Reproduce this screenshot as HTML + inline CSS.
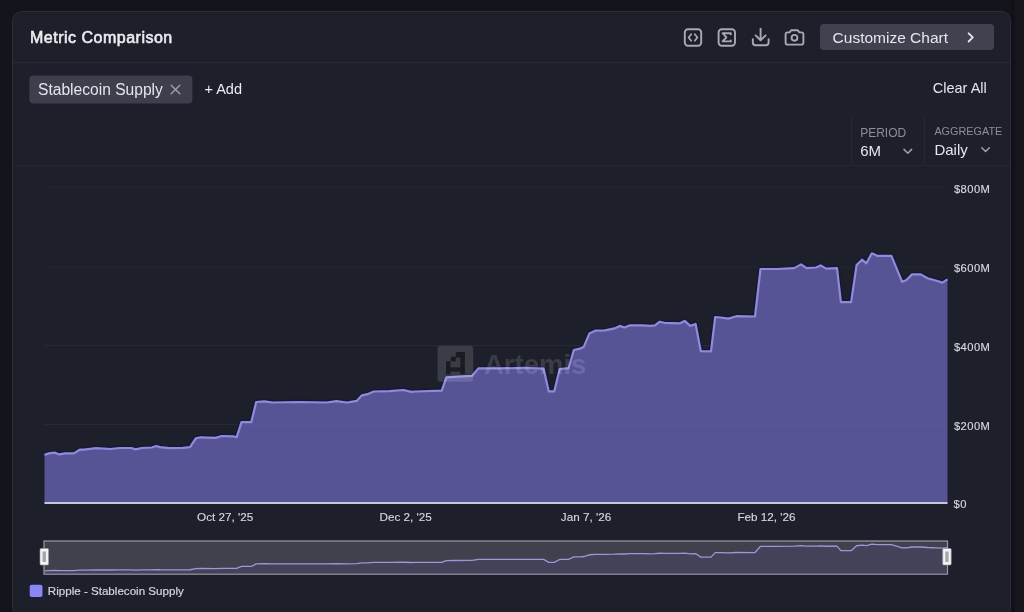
<!DOCTYPE html>
<html><head><meta charset="utf-8">
<style>
html,body{margin:0;padding:0;width:1024px;height:612px;overflow:hidden;background:#14141c;}
body{position:relative;font-family:"Liberation Sans",sans-serif;}
.card{position:absolute;left:12px;top:11px;width:999px;height:606px;background:#1d1f2b;border:1px solid #2c2d38;border-radius:10px;box-sizing:border-box;}
svg{position:absolute;left:0;top:0;will-change:transform;}
</style></head><body>
<div style="position:absolute;left:1011px;top:0;width:4px;height:612px;background:#111118"></div><div style="position:absolute;left:1015px;top:0;width:9px;height:612px;background:#17161d"></div>
<div class="card"></div>
<svg width="1024" height="612" viewBox="0 0 1024 612" font-family="Liberation Sans, sans-serif">
  <!-- separators -->
  <rect x="13" y="62" width="997" height="1" fill="#292a36"/>
  <rect x="13" y="165" width="997" height="1" fill="#262733"/>
  <rect x="851" y="115" width="1" height="50" fill="#272834"/>
  <rect x="924" y="115" width="1" height="50" fill="#272834"/>
  <!-- title -->
  <text x="30" y="43.1" font-size="16" letter-spacing="0.5" fill="#ececf0" stroke="#ececf0" stroke-width="0.6">Metric Comparison</text>
  <!-- icons -->
  <g fill="none" stroke="#a9a9b3" stroke-width="1.9" stroke-linecap="round" stroke-linejoin="round">
    <rect x="684.8" y="29.3" width="16.4" height="16.4" rx="3.2"/>
    <path d="M691.2,34.3 L688.6,37.5 L691.2,40.7 M694.8,34.3 L697.4,37.5 L694.8,40.7" stroke-width="1.8"/>
    <rect x="718.6" y="29.3" width="16.4" height="16.4" rx="3.2"/>
    <path d="M730.8,34.2 L730.8,33.2 L722.6,33.2 L726.4,37.3 L722.6,41.4 L730.8,41.4 L730.8,40.4" stroke-width="1.9"/>
    <path d="M760.6,28.6 L760.6,40 M755.6,35.4 L760.6,40.3 L765.6,35.4 M752.8,39.3 L752.8,42.6 Q752.8,45.3 755.5,45.3 L765.9,45.3 Q768.6,45.3 768.6,42.6 L768.6,39.3"/>
    <path d="M785.6,34.6 Q785.6,32.4 787.8,32.4 L789.6,32.4 L791.2,30.2 L797.8,30.2 L799.4,32.4 L801.2,32.4 Q803.4,32.4 803.4,34.6 L803.4,42.4 Q803.4,44.6 801.2,44.6 L787.8,44.6 Q785.6,44.6 785.6,42.4 Z"/>
    <circle cx="794.5" cy="37.8" r="2.9"/>
  </g>
  <!-- customize button -->
  <rect x="820" y="24" width="174" height="26" rx="4" fill="#41424f"/>
  <text x="832.6" y="43" font-size="15.5" fill="#e6e6ec">Customize Chart</text>
  <path d="M968.6,33.3 L972.8,37.4 L968.6,41.5" fill="none" stroke="#e6e6ec" stroke-width="1.8" stroke-linecap="round" stroke-linejoin="round"/>
  <!-- chip -->
  <rect x="29.4" y="75.4" width="163" height="28" rx="4" fill="#3e3f4d"/>
  <text x="38" y="95.3" font-size="15.6" fill="#e4e4ea">Stablecoin Supply</text>
  <path d="M171.2,85.2 L179.8,93.8 M179.8,85.2 L171.2,93.8" stroke="#9c9ca8" stroke-width="1.5" stroke-linecap="round"/>
  <text x="204.5" y="94.2" font-size="14.5" fill="#ececf0">+ Add</text>
  <text x="932.8" y="92.7" font-size="14.5" fill="#e6e6ec">Clear All</text>
  <!-- period / aggregate -->
  <text x="860.2" y="136.7" font-size="12" fill="#8e8e98">PERIOD</text>
  <text x="860.2" y="155.7" font-size="15" fill="#e6e6ec">6M</text>
  <path d="M904,149.4 L907.8,153.2 L911.6,149.4" fill="none" stroke="#a0a0aa" stroke-width="1.5" stroke-linecap="round" stroke-linejoin="round"/>
  <text x="934.4" y="134.6" font-size="10.85" fill="#8e8e98">AGGREGATE</text>
  <text x="934.4" y="154.8" font-size="15" fill="#e6e6ec">Daily</text>
  <path d="M981.8,147.7 L985.6,151.5 L989.4,147.7" fill="none" stroke="#a0a0aa" stroke-width="1.5" stroke-linecap="round" stroke-linejoin="round"/>
  <!-- grid -->
  <g fill="#252632">
    <rect x="44" y="186.7" width="903" height="1"/>
    <rect x="44" y="266.5" width="903" height="1"/>
    <rect x="44" y="344.9" width="903" height="1"/>
    <rect x="44" y="423.9" width="903" height="1"/>
  </g>
  <!-- area -->
  <path d="M44.5,454.9 L48.8,453.4 L54.7,452.6 L59.1,454.4 L65.0,453.4 L73.8,453.4 L79.7,449.7 L84.1,449.7 L95.9,448.2 L110.6,449.0 L119.4,448.0 L131.2,448.0 L135.6,449.4 L141.5,448.0 L151.8,447.5 L156.2,446.0 L160.0,447.1 L169.6,448.2 L182.7,447.9 L190.0,447.1 L195.8,438.4 L200.7,437.3 L215.4,437.9 L221.9,436.0 L233.3,436.3 L236.6,437.3 L241.5,422.1 L251.3,422.1 L256.2,402.0 L264.4,401.3 L272.5,402.5 L298.8,402.0 L326.9,402.5 L336.3,401.2 L347.2,402.5 L356.6,400.9 L362.0,395.3 L367.5,394.2 L373.8,391.5 L389.4,391.1 L403.4,390.0 L411.3,391.9 L415.9,391.5 L441.7,390.6 L446.4,377.3 L453.4,376.9 L472.2,375.8 L478.4,368.4 L500.3,368.4 L523.8,367.9 L543.6,368.7 L548.8,391.4 L554.2,391.4 L559.7,369.0 L568.6,368.2 L573.8,350.0 L580.0,348.7 L583.9,346.7 L589.4,333.4 L595.6,330.6 L605.0,330.3 L614.4,328.4 L619.8,325.9 L624.5,327.5 L630.0,325.3 L642.5,325.3 L650.3,325.9 L655.0,325.3 L659.7,321.7 L664.4,322.8 L680.0,323.3 L684.7,320.9 L690.2,325.9 L695.6,324.0 L700.8,351.2 L711.0,351.4 L715.2,317.0 L720.6,317.5 L728.4,318.6 L736.3,316.2 L755.0,316.5 L760.5,269.0 L776.9,269.0 L794.1,268.1 L801.1,264.4 L806.6,268.1 L815.9,267.5 L820.6,265.4 L826.1,268.6 L837.0,268.1 L840.9,302.2 L851.1,302.2 L856.6,265.0 L862.0,259.7 L866.4,263.3 L871.8,253.3 L877.2,255.8 L891.4,255.8 L902.2,281.8 L906.1,280.3 L912.0,274.4 L920.8,274.4 L927.6,278.3 L936.5,280.8 L942.4,282.6 L947.5,279.3" fill="none" stroke="#16163a" stroke-opacity="0.75" stroke-width="5" stroke-linejoin="round"/>
  <path d="M44.5,454.9 L48.8,453.4 L54.7,452.6 L59.1,454.4 L65.0,453.4 L73.8,453.4 L79.7,449.7 L84.1,449.7 L95.9,448.2 L110.6,449.0 L119.4,448.0 L131.2,448.0 L135.6,449.4 L141.5,448.0 L151.8,447.5 L156.2,446.0 L160.0,447.1 L169.6,448.2 L182.7,447.9 L190.0,447.1 L195.8,438.4 L200.7,437.3 L215.4,437.9 L221.9,436.0 L233.3,436.3 L236.6,437.3 L241.5,422.1 L251.3,422.1 L256.2,402.0 L264.4,401.3 L272.5,402.5 L298.8,402.0 L326.9,402.5 L336.3,401.2 L347.2,402.5 L356.6,400.9 L362.0,395.3 L367.5,394.2 L373.8,391.5 L389.4,391.1 L403.4,390.0 L411.3,391.9 L415.9,391.5 L441.7,390.6 L446.4,377.3 L453.4,376.9 L472.2,375.8 L478.4,368.4 L500.3,368.4 L523.8,367.9 L543.6,368.7 L548.8,391.4 L554.2,391.4 L559.7,369.0 L568.6,368.2 L573.8,350.0 L580.0,348.7 L583.9,346.7 L589.4,333.4 L595.6,330.6 L605.0,330.3 L614.4,328.4 L619.8,325.9 L624.5,327.5 L630.0,325.3 L642.5,325.3 L650.3,325.9 L655.0,325.3 L659.7,321.7 L664.4,322.8 L680.0,323.3 L684.7,320.9 L690.2,325.9 L695.6,324.0 L700.8,351.2 L711.0,351.4 L715.2,317.0 L720.6,317.5 L728.4,318.6 L736.3,316.2 L755.0,316.5 L760.5,269.0 L776.9,269.0 L794.1,268.1 L801.1,264.4 L806.6,268.1 L815.9,267.5 L820.6,265.4 L826.1,268.6 L837.0,268.1 L840.9,302.2 L851.1,302.2 L856.6,265.0 L862.0,259.7 L866.4,263.3 L871.8,253.3 L877.2,255.8 L891.4,255.8 L902.2,281.8 L906.1,280.3 L912.0,274.4 L920.8,274.4 L927.6,278.3 L936.5,280.8 L942.4,282.6 L947.5,279.3 L947.5,503 L44.5,503 Z" fill="#565495"/>
  <g fill="rgba(255,255,255,0.025)">
    <rect x="44" y="344.9" width="903" height="1"/>
    <rect x="44" y="423.9" width="903" height="1"/>
  </g>
  <path d="M44.5,454.9 L48.8,453.4 L54.7,452.6 L59.1,454.4 L65.0,453.4 L73.8,453.4 L79.7,449.7 L84.1,449.7 L95.9,448.2 L110.6,449.0 L119.4,448.0 L131.2,448.0 L135.6,449.4 L141.5,448.0 L151.8,447.5 L156.2,446.0 L160.0,447.1 L169.6,448.2 L182.7,447.9 L190.0,447.1 L195.8,438.4 L200.7,437.3 L215.4,437.9 L221.9,436.0 L233.3,436.3 L236.6,437.3 L241.5,422.1 L251.3,422.1 L256.2,402.0 L264.4,401.3 L272.5,402.5 L298.8,402.0 L326.9,402.5 L336.3,401.2 L347.2,402.5 L356.6,400.9 L362.0,395.3 L367.5,394.2 L373.8,391.5 L389.4,391.1 L403.4,390.0 L411.3,391.9 L415.9,391.5 L441.7,390.6 L446.4,377.3 L453.4,376.9 L472.2,375.8 L478.4,368.4 L500.3,368.4 L523.8,367.9 L543.6,368.7 L548.8,391.4 L554.2,391.4 L559.7,369.0 L568.6,368.2 L573.8,350.0 L580.0,348.7 L583.9,346.7 L589.4,333.4 L595.6,330.6 L605.0,330.3 L614.4,328.4 L619.8,325.9 L624.5,327.5 L630.0,325.3 L642.5,325.3 L650.3,325.9 L655.0,325.3 L659.7,321.7 L664.4,322.8 L680.0,323.3 L684.7,320.9 L690.2,325.9 L695.6,324.0 L700.8,351.2 L711.0,351.4 L715.2,317.0 L720.6,317.5 L728.4,318.6 L736.3,316.2 L755.0,316.5 L760.5,269.0 L776.9,269.0 L794.1,268.1 L801.1,264.4 L806.6,268.1 L815.9,267.5 L820.6,265.4 L826.1,268.6 L837.0,268.1 L840.9,302.2 L851.1,302.2 L856.6,265.0 L862.0,259.7 L866.4,263.3 L871.8,253.3 L877.2,255.8 L891.4,255.8 L902.2,281.8 L906.1,280.3 L912.0,274.4 L920.8,274.4 L927.6,278.3 L936.5,280.8 L942.4,282.6 L947.5,279.3" fill="none" stroke="#918ada" stroke-width="2.2" stroke-linejoin="round"/>
  <rect x="44.5" y="502" width="903" height="2" fill="#c7c4de"/>
  <!-- watermark -->
  <g opacity="1">
    <rect x="437.5" y="345.7" width="35.7" height="36" rx="3" fill="rgba(255,255,255,0.13)"/>
    <g fill="#16161e" opacity="0.85">
      <rect x="455.8" y="352.1" width="9" height="5.5"/>
      <rect x="450.8" y="356.8" width="5" height="4.5"/>
      <rect x="460.3" y="352.1" width="4.5" height="22.1"/>
      <rect x="446" y="361.3" width="4.5" height="12.9"/>
      <rect x="446" y="367.4" width="18.8" height="4.1"/>
    </g>
    <text x="484" y="374" font-size="27.5" font-weight="700" fill="rgba(255,255,255,0.13)">Artemis</text>
  </g>
  <!-- y labels -->
  <g font-size="11.2" letter-spacing="0.45" fill="#d8d8de" stroke="#d8d8de" stroke-width="0.15">
    <text x="953.9" y="193.2">$800M</text>
    <text x="953.9" y="272.1">$600M</text>
    <text x="953.9" y="350.9">$400M</text>
    <text x="953.9" y="429.8">$200M</text>
    <text x="953.6" y="508.2">$0</text>
  </g>
  <!-- x labels -->
  <g font-size="11.7" fill="#d6d6de" stroke="#d6d6de" stroke-width="0.15" text-anchor="middle">
    <text x="225.2" y="521.3">Oct 27, '25</text>
    <text x="405.6" y="521.3">Dec 2, '25</text>
    <text x="586" y="521.3">Jan 7, '26</text>
    <text x="766.5" y="521.3">Feb 12, '26</text>
  </g>
  <!-- navigator -->
  <rect x="44" y="541" width="903.5" height="33.2" fill="#40414d" stroke="#9a9aa6" stroke-width="1.2"/>
  <path d="M44.5,570.18 L48.8,569.99 L54.7,569.88 L59.1,570.12 L65.0,569.99 L73.8,569.99 L79.7,569.50 L84.1,569.50 L95.9,569.30 L110.6,569.41 L119.4,569.28 L131.2,569.28 L135.6,569.46 L141.5,569.28 L151.8,569.21 L156.2,569.01 L160.0,569.16 L169.6,569.30 L182.7,569.26 L190.0,569.16 L195.8,568.01 L200.7,567.86 L215.4,567.94 L221.9,567.69 L233.3,567.73 L236.6,567.86 L241.5,565.86 L251.3,565.86 L256.2,563.21 L264.4,563.12 L272.5,563.28 L298.8,563.21 L326.9,563.28 L336.3,563.11 L347.2,563.28 L356.6,563.07 L362.0,562.33 L367.5,562.18 L373.8,561.83 L389.4,561.78 L403.4,561.63 L411.3,561.88 L415.9,561.83 L441.7,561.71 L446.4,559.96 L453.4,559.90 L472.2,559.76 L478.4,558.78 L500.3,558.78 L523.8,558.72 L543.6,558.82 L548.8,561.82 L554.2,561.82 L559.7,558.86 L568.6,558.76 L573.8,556.36 L580.0,556.19 L583.9,555.92 L589.4,554.17 L595.6,553.80 L605.0,553.76 L614.4,553.51 L619.8,553.18 L624.5,553.39 L630.0,553.10 L642.5,553.10 L650.3,553.18 L655.0,553.10 L659.7,552.63 L664.4,552.77 L680.0,552.84 L684.7,552.52 L690.2,553.18 L695.6,552.93 L700.8,556.52 L711.0,556.54 L715.2,552.01 L720.6,552.08 L728.4,552.22 L736.3,551.90 L755.0,551.94 L760.5,545.68 L776.9,545.68 L794.1,545.56 L801.1,545.08 L806.6,545.56 L815.9,545.49 L820.6,545.21 L826.1,545.63 L837.0,545.56 L840.9,550.06 L851.1,550.06 L856.6,545.16 L862.0,544.46 L866.4,544.93 L871.8,543.61 L877.2,543.94 L891.4,543.94 L902.2,547.37 L906.1,547.17 L912.0,546.39 L920.8,546.39 L927.6,546.91 L936.5,547.24 L942.4,547.48 L947.5,547.04 L947.5,574 L44.5,574 Z" transform="translate(0,0.6)" fill="rgba(90,80,190,0.10)"/>
  <path d="M44.5,570.18 L48.8,569.99 L54.7,569.88 L59.1,570.12 L65.0,569.99 L73.8,569.99 L79.7,569.50 L84.1,569.50 L95.9,569.30 L110.6,569.41 L119.4,569.28 L131.2,569.28 L135.6,569.46 L141.5,569.28 L151.8,569.21 L156.2,569.01 L160.0,569.16 L169.6,569.30 L182.7,569.26 L190.0,569.16 L195.8,568.01 L200.7,567.86 L215.4,567.94 L221.9,567.69 L233.3,567.73 L236.6,567.86 L241.5,565.86 L251.3,565.86 L256.2,563.21 L264.4,563.12 L272.5,563.28 L298.8,563.21 L326.9,563.28 L336.3,563.11 L347.2,563.28 L356.6,563.07 L362.0,562.33 L367.5,562.18 L373.8,561.83 L389.4,561.78 L403.4,561.63 L411.3,561.88 L415.9,561.83 L441.7,561.71 L446.4,559.96 L453.4,559.90 L472.2,559.76 L478.4,558.78 L500.3,558.78 L523.8,558.72 L543.6,558.82 L548.8,561.82 L554.2,561.82 L559.7,558.86 L568.6,558.76 L573.8,556.36 L580.0,556.19 L583.9,555.92 L589.4,554.17 L595.6,553.80 L605.0,553.76 L614.4,553.51 L619.8,553.18 L624.5,553.39 L630.0,553.10 L642.5,553.10 L650.3,553.18 L655.0,553.10 L659.7,552.63 L664.4,552.77 L680.0,552.84 L684.7,552.52 L690.2,553.18 L695.6,552.93 L700.8,556.52 L711.0,556.54 L715.2,552.01 L720.6,552.08 L728.4,552.22 L736.3,551.90 L755.0,551.94 L760.5,545.68 L776.9,545.68 L794.1,545.56 L801.1,545.08 L806.6,545.56 L815.9,545.49 L820.6,545.21 L826.1,545.63 L837.0,545.56 L840.9,550.06 L851.1,550.06 L856.6,545.16 L862.0,544.46 L866.4,544.93 L871.8,543.61 L877.2,543.94 L891.4,543.94 L902.2,547.37 L906.1,547.17 L912.0,546.39 L920.8,546.39 L927.6,546.91 L936.5,547.24 L942.4,547.48 L947.5,547.04" transform="translate(0,0.6)" fill="none" stroke="#9c97d6" stroke-width="1.3" stroke-linejoin="round"/>
  <g>
    <rect x="40" y="548.5" width="8.5" height="16.5" rx="1" fill="#f2f2f4" stroke="#9a9aa2" stroke-width="0.6"/>
    <rect x="42.6" y="551.5" width="3.3" height="10.5" fill="#a4a4ac"/>
    <rect x="942.7" y="548.5" width="8.5" height="16.5" rx="1" fill="#f2f2f4" stroke="#9a9aa2" stroke-width="0.6"/>
    <rect x="945.3" y="551.5" width="3.3" height="10.5" fill="#a4a4ac"/>
  </g>
  <!-- legend -->
  <rect x="29.7" y="584.7" width="12.8" height="12.3" rx="2" fill="#8a86f5"/>
  <text x="47.8" y="594.9" font-size="11.6" fill="#d6d6de" stroke="#d6d6de" stroke-width="0.2">Ripple - Stablecoin Supply</text>
</svg>
</body></html>
